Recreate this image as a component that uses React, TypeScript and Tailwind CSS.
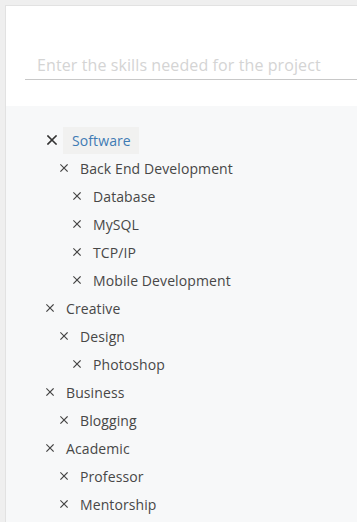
import React from "react";

type Node = { label: string; level: number; active?: boolean };

const items: Node[] = [
  { label: "Software", level: 0, active: true },
  { label: "Back End Development", level: 1 },
  { label: "Database", level: 2 },
  { label: "MySQL", level: 2 },
  { label: "TCP/IP", level: 2 },
  { label: "Mobile Development", level: 2 },
  { label: "Creative", level: 0 },
  { label: "Design", level: 1 },
  { label: "Photoshop", level: 2 },
  { label: "Business", level: 0 },
  { label: "Blogging", level: 1 },
  { label: "Academic", level: 0 },
  { label: "Professor", level: 1 },
  { label: "Mentorship", level: 1 },
];

const padClass = ["pl-[40px]", "pl-[54px]", "pl-[67px]"];

function XIcon({ big }: { big?: boolean }) {
  const s = big ? 10 : 8;
  return (
    <svg width={s} height={s} viewBox="0 0 10 10" className="shrink-0">
      <path
        d="M1 1 L9 9 M9 1 L1 9"
        stroke={big ? "#333" : "#444"}
        strokeWidth={big ? 1.6 : 1.5}
        strokeLinecap="square"
      />
    </svg>
  );
}

export default function App() {
  return (
    <div
      className="w-[357px] h-[522px] bg-[#efefef] pt-[5px] pl-[5px] overflow-hidden"
      style={{ fontFamily: '"Open Sans", "Noto Sans", sans-serif' }}
    >
      <div className="h-full border-l border-t border-[#e2e2e2] bg-white flex flex-col">
        <div className="h-[100px] pl-[19px] pt-[44px] bg-white">
          <div className="border-b border-[#c8c8c8] h-[30px] pl-[12px] flex items-center">
            <span className="text-[16px] tracking-[0.1px] text-[#d4d4d4] leading-none">
              Enter the skills needed for the project
            </span>
          </div>
        </div>
        <div className="flex-1 bg-[#f7f8f9] pt-[20px]">
          {items.map((it, i) =>
            it.active ? (
              <div key={i} className="h-[28px] flex items-center pl-[41px]">
                <XIcon big />
                <span className="ml-[6px] h-[27px] pl-[9px] pr-[8px] flex items-center bg-[#f1f1f0] text-[#3f7bb4] text-[14px] tracking-[0.1px]">
                  {it.label}
                </span>
              </div>
            ) : (
              <div
                key={i}
                className={`h-[28px] flex items-center ${padClass[it.level]}`}
              >
                <XIcon />
                <span className="ml-[12px] text-[14px] tracking-[0.1px] text-[#474747]">
                  {it.label}
                </span>
              </div>
            )
          )}
        </div>
      </div>
    </div>
  );
}
